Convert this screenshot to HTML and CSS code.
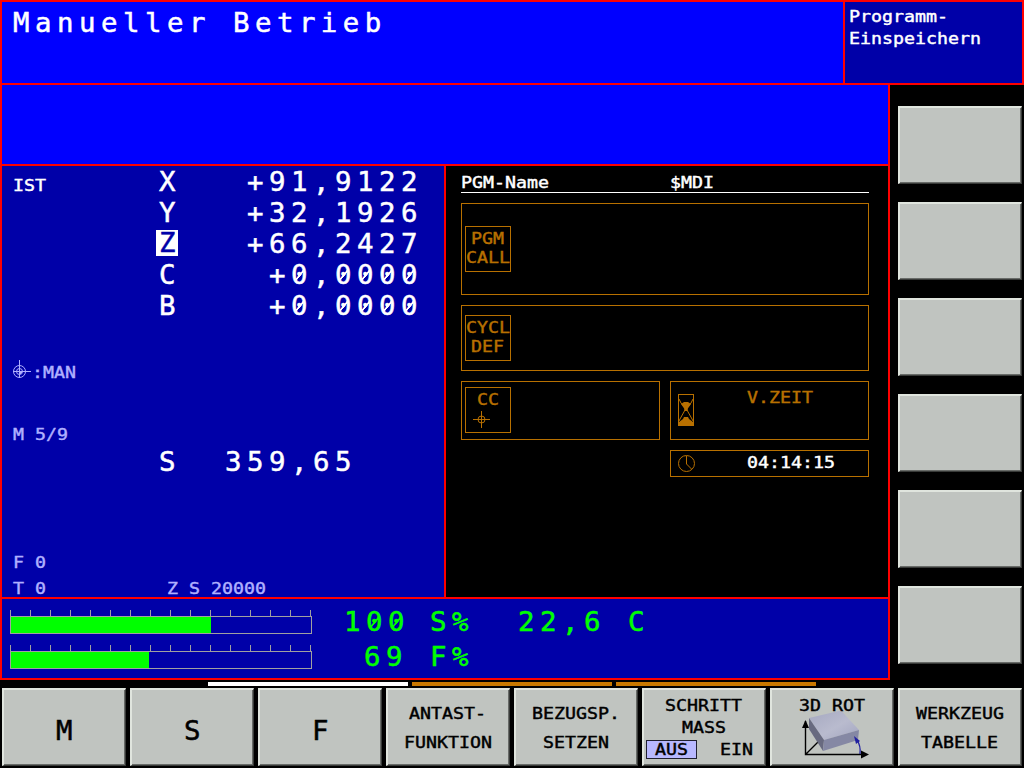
FILE: index.html
```html
<!DOCTYPE html>
<html lang="de">
<head>
<meta charset="utf-8">
<title>Manueller Betrieb</title>
<link rel="stylesheet" href="styles.css">
</head>
<body>
<div class="screen">
  <header class="top">
    <div class="mode"><span class="big">Manueller Betrieb</span></div>
    <div class="submode"><span class="small">Programm-</span><span class="small">Einspeichern</span></div>
  </header>
  <div class="middle">
    <main class="work">
      <div class="message"></div>
      <div class="panels">
        <section class="position">
          <div class="label-ist"><span class="small">IST</span></div>
          <div class="axes">
            <div class="axis"><span class="big name">X</span><span class="big value">+91,9122</span></div>
            <div class="axis"><span class="big name">Y</span><span class="big value">+32,1926</span></div>
            <div class="axis"><span class="big name active">Z</span><span class="big value">+66,2427</span></div>
            <div class="axis"><span class="big name">C</span><span class="big value">+<i>0</i>,<i>0</i><i>0</i><i>0</i><i>0</i></span></div>
            <div class="axis"><span class="big name">B</span><span class="big value">+<i>0</i>,<i>0</i><i>0</i><i>0</i><i>0</i></span></div>
          </div>
          <div class="datum dim">
            <svg width="20" height="20" viewBox="0 0 20 20" fill="none" stroke="currentColor"><circle cx="7.5" cy="11.5" r="6"/><circle cx="7.5" cy="11.5" r="3"/><path d="M7.5 0V18M1 11.5H19"/><path d="M7.5 11.5H10.5L7.5 14.5Z" fill="currentColor"/></svg>
            <span class="small">:MAN</span>
          </div>
          <div class="mfunc dim"><span class="small">M 5/9</span></div>
          <div class="spindle"><span class="big">S</span><span class="big speed">359,65</span></div>
          <div class="feed dim"><span class="small">F 0</span></div>
          <div class="tool dim"><span class="small">T 0</span><span class="small tool-axis">Z S 20000</span></div>
        </section>
        <section class="program">
          <div class="pgm-head"><span class="small">PGM-Name</span><span class="small">$MDI</span></div>
          <div class="box box-call"><div class="tag"><span class="small">PGM</span><span class="small">CALL</span></div></div>
          <div class="box box-cycl"><div class="tag"><span class="small">CYCL</span><span class="small">DEF</span></div></div>
          <div class="pair">
            <div class="box box-cc"><div class="tag tag-cc"><span class="small">CC</span>
              <svg width="17" height="17" viewBox="0 0 17 17" fill="none" stroke="currentColor" shape-rendering="crispEdges"><path d="M8.5 0V17M0 8.5H17"/><circle cx="8.5" cy="8.5" r="3.5" shape-rendering="auto"/></svg></div></div>
            <div class="box box-time">
              <svg width="16" height="32" viewBox="0 0 16 32" fill="none" stroke="currentColor"><rect x=".5" y=".5" width="15" height="31"/><path d="M1 5L3 9L7 14V16L2 25L1 27M15 5L13 9L9 14V16L14 25L15 27"/><path d="M3 10L6 8H10L13 10L9.500 15V17H6.500V15ZM1 28L5 25L6 23H10L11 25L15 28V31H1Z" fill="currentColor" stroke="none"/></svg>
              <span class="small">V.ZEIT</span>
            </div>
          </div>
          <div class="box box-clock">
            <svg width="18" height="18" viewBox="0 0 18 18" fill="none" stroke="currentColor"><circle cx="8.5" cy="8.5" r="8"/><path d="M8.5 1V9L13.5 14"/></svg>
            <span class="small clock">04:14:15</span>
          </div>
        </section>
      </div>
      <section class="override">
        <div class="meters">
          <div class="meter"><div class="ticks"></div><div class="track"><div class="fill" style="width:200px"></div></div></div>
          <div class="meter"><div class="ticks"></div><div class="track"><div class="fill" style="width:138px"></div></div></div>
        </div>
        <div class="percent">
          <span class="big">1<i>0</i><i>0</i></span><span class="big">S%</span>
          <span class="big">69</span><span class="big">F%</span>
        </div>
        <span class="big temp">22,6 C</span>
      </section>
    </main>
    <aside class="side">
      <div class="key"></div><div class="key"></div><div class="key"></div>
      <div class="key"></div><div class="key"></div><div class="key"></div>
    </aside>
  </div>
  <div class="pages"><span class="page current"></span><span class="page"></span><span class="page"></span></div>
  <footer class="softkeys">
    <div class="key single"><span class="big">M</span></div>
    <div class="key single"><span class="big">S</span></div>
    <div class="key single"><span class="big">F</span></div>
    <div class="key double"><span class="small">ANTAST-</span><span class="small">FUNKTION</span></div>
    <div class="key double"><span class="small">BEZUGSP.</span><span class="small">SETZEN</span></div>
    <div class="key triple"><span class="small">SCHRITT</span><span class="small">MASS</span>
      <div class="toggle"><div class="opt on"><span class="small">AUS</span></div><div class="opt"><span class="small">EIN</span></div></div>
    </div>
    <div class="key triple rot"><span class="small">3D ROT</span>
      <svg width="70" height="49" viewBox="0 0 70 49">
        <defs><linearGradient id="top" x1="0" y1="0" x2="1" y2="1"><stop offset="0" stop-color="#a5a8c0"/><stop offset=".55" stop-color="#b9bbce"/><stop offset="1" stop-color="#a2a5c0"/></linearGradient></defs>
        <path d="M5.500 11V44.500H63M5.500 44.500L20 30" fill="none" stroke="#000" stroke-width="1.400"/>
        <path d="M5.500 10L2 18H9ZM69 44.500L61 40.500V48.500Z" fill="#000"/>
        <path d="M9 8L41 .5L59 20L24 30Z" fill="url(#top)"/>
        <path d="M9 8L24 30L23 41L9 19Z" fill="#686a80"/>
        <path d="M24 30L59 20L58 30L23 41Z" fill="#8588a4"/>
        <path d="M60 44Q61 36 57 30" fill="none" stroke="#2020a0" stroke-width="1.300"/>
        <path d="M54 26L60 31L56 34Z" fill="#2020a0"/>
      </svg>
    </div>
    <div class="key double"><span class="small">WERKZEUG</span><span class="small">TABELLE</span></div>
  </footer>
</div>
</body>
</html>
```
FILE: styles.css
```css
* { box-sizing: border-box; }
body { margin: 0; background: #000; }
.screen {
  width: 1024px; height: 768px; overflow: hidden;
  display: flex; flex-direction: column;
  background: #000; color: #fff;
  font-family: "DejaVu Sans Mono", monospace;
}

/* Terminal lettering: 22px pitch for large, 11px pitch for small */
.big {
  display: block; white-space: pre;
  font-size: 27.4px; line-height: 31px; letter-spacing: 5.5px;
  -webkit-text-stroke: .5px currentColor;
}
.big i {
  font-style: normal;
  background: linear-gradient(to bottom right, transparent 42%, currentColor 45%, currentColor 55%, transparent 58%) 4px 11px / 9px 11px no-repeat;
}
.small {
  display: block; width: max-content; white-space: pre;
  font-size: 15px; line-height: 18px;
  transform: scaleX(1.218); transform-origin: 0 50%;
  -webkit-text-stroke: .4px currentColor;
}
.dim { color: #b0b0ff; }

/* Header */
.top { display: flex; height: 85px; border: 2px solid #f00; flex: none; }
.mode { flex: 1; background: #00f; padding: 5px 0 0 11px; }
.submode { width: 179px; border-left: 2px solid #f00; background: #0000a8; padding: 4px 0 0 4px; }
.submode .small { line-height: 22px; }

.middle { display: flex; height: 595px; flex: none; }
.work {
  width: 890px; display: flex; flex-direction: column;
  border: solid #f00; border-width: 0 2px 2px;
}
.message { height: 81px; background: #00f; border-bottom: 2px solid #f00; flex: none; }
.panels { display: flex; height: 433px; border-bottom: 2px solid #f00; flex: none; }

/* Axis positions */
.position {
  width: 444px; border-right: 2px solid #f00; background: #0000a8;
  display: grid; grid-template-columns: 153px 1fr;
  grid-template-rows: 198px 62px 20px 108px 26px 18px;
  padding-left: 11px;
}
.label-ist { padding-top: 11px; }
.axis { display: flex; height: 31px; padding-right: 21px; justify-content: space-between; }
.axes { margin-left: -10px; }
.name { width: 22px; padding-left: 3px; }
.name.active { background: #fff; color: #0000a8; height: 26px; line-height: 26px; margin-top: 2px; }
.datum { grid-column: 1 / 3; display: flex; margin: -4px 0 0 -1px; }
.datum .small { margin-top: 4px; }
.mfunc { grid-column: 1 / 3; }
.spindle { grid-column: 2; display: flex; margin-left: -7px; }
.speed { margin-left: 44px; }
.feed { grid-column: 1 / 3; }
.tool { grid-column: 1 / 3; display: flex; }
.tool-axis { margin-left: 127px; }

/* Program status */
.program { flex: 1; padding: 8px 19px 0 15px; color: #b87000; }
.pgm-head { display: grid; grid-template-columns: 209px 1fr; height: 19px; border-bottom: 1px solid #fff; color: #fff; }
.box { border: 1px solid #b87000; display: flex; }
.tag { width: 46px; height: 46px; border: 1px solid #b87000; margin-left: 3px; padding-top: 3px; display: flex; flex-direction: column; align-items: center; }
.tag .small { line-height: 19px; transform-origin: 50% 50%; }
.box-call { height: 92px; margin-top: 10px; align-items: center; }
.box-cycl { height: 66px; margin-top: 10px; align-items: center; }
.pair { display: grid; grid-template-columns: 199px 199px; gap: 10px; margin-top: 10px; }
.box-cc { height: 59px; padding-top: 5px; }
.tag-cc svg { margin: 1px 13px 0 0; }
.box-time { height: 59px; padding: 12px 0 0 7px; }
.box-time .small { margin: -5px 0 0 53px; }
.box-clock { width: 199px; height: 27px; margin: 10px 0 0 209px; padding: 4px 0 0 7px; }
.box-clock .small { margin: -1px 0 0 51px; color: #fff; }

/* Override meters */
.override { flex: 1; min-height: 0; display: flex; background: #0000a8; color: #0f0; padding: 7px 0 0 8px; }
.meters { width: 302px; padding-top: 4px; }
.meter { height: 35px; }
.ticks { height: 6px; background: repeating-linear-gradient(90deg, #a0a0a0 0 1px, transparent 1px 20px); }
.track { height: 18px; border: 1px solid #a0a0a0; }
.fill { height: 16px; background: #0f0; }
.percent { display: grid; grid-template-columns: 86px 66px; grid-template-rows: 35px 31px; align-content: start; margin-left: 32px; width: 174px; }
.percent .big:nth-child(3) { padding-left: 20px; }

/* Keys */
.side { display: flex; flex-direction: column; gap: 18px; padding: 21px 0 0 8px; }
.key {
  width: 124px; height: 78px; background: #c0c4c0; color: #000; flex: none;
  border: solid; border-width: 2px 1px 1px 2px; border-color: #e0e5de #383a38 #383a38 #e0e5de;
  box-shadow: inset -1px -1px #686b68;
  padding-right: 1px;
  display: flex; flex-direction: column; align-items: center;
}
.key .small { transform-origin: 50% 50%; }
.pages { display: flex; gap: 4px; height: 8px; padding: 2px 0 2px 208px; flex: none; }
.page { width: 200px; background: #c87800; }
.page.current { background: #fff; }
.softkeys { display: flex; gap: 4px; padding-left: 2px; }
.single { padding-top: 25px; }
.single .big { margin-right: -6px; }
.double { padding-top: 15px; }
.double .small { line-height: 18px; margin-bottom: 11px; }
.triple { padding-top: 7px; }
.triple > .small { margin-bottom: 4px; }
.toggle { display: flex; gap: 14px; margin: -1px 0 0; }
.opt { width: 51px; height: 19px; display: flex; justify-content: center; border: 1px solid transparent; }
.opt.on { background: #b8b8ff; border-color: #202030; }
.opt .small { line-height: 18px; }
.rot svg { margin: -9px 0 0 6px; }
```
